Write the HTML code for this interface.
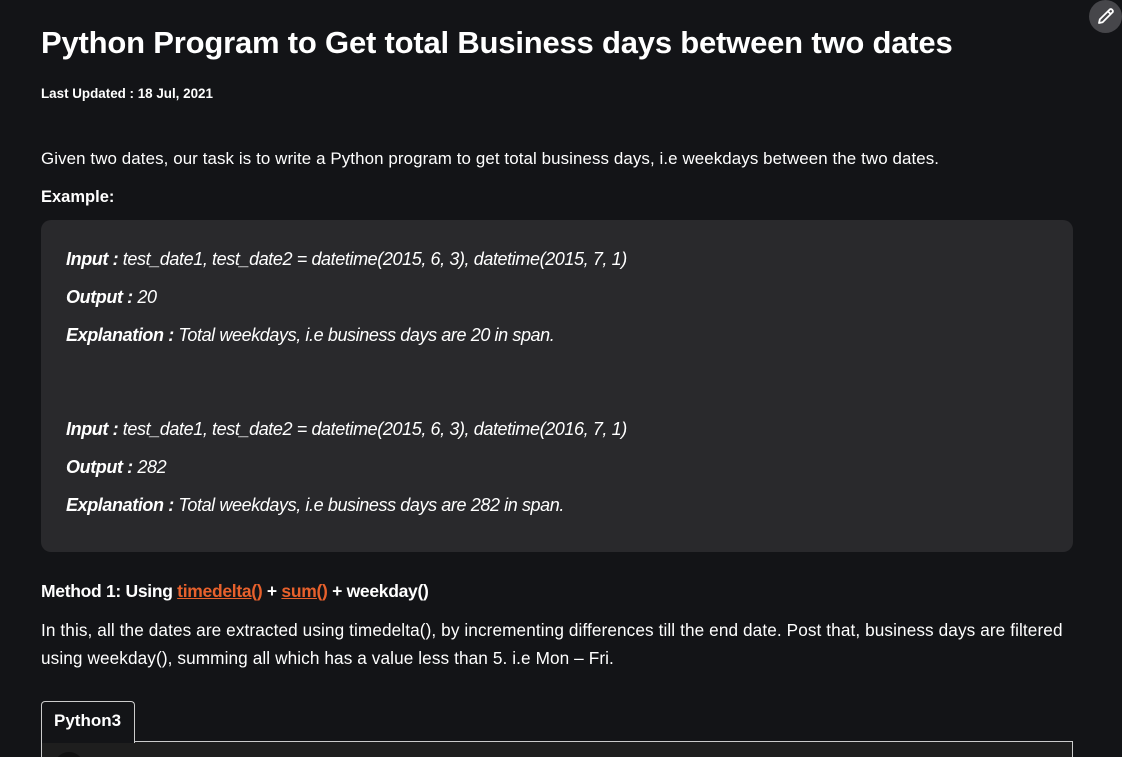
<!DOCTYPE html>
<html><head><meta charset="utf-8"><style>
html,body{margin:0;padding:0;background:#131417;width:1122px;height:757px;overflow:hidden}
body{font-family:"Liberation Sans",sans-serif;color:#fff;position:relative}
.a{position:absolute;white-space:nowrap}
h1{position:absolute;left:41px;top:25px;margin:0;font-size:31px;font-weight:bold;letter-spacing:-0.2px}
.p{letter-spacing:0.1px}
.box{position:absolute;left:41px;top:220px;width:1032px;height:332px;background:#29292c;border-radius:10px}
.ex{font-style:italic;font-size:18px;letter-spacing:-0.4px}
.ex b{font-weight:bold}
a{color:#e8612c;text-decoration:underline}
.pen{position:absolute;left:1089px;top:0;width:33px;height:33px;border-radius:50%;background:#46464a}
.tab{position:absolute;left:41px;top:701px;width:94px;height:42px;border:1px solid #ccc;border-bottom:none;border-radius:4px 4px 0 0;background:#131417;font-size:17px;font-weight:bold;box-sizing:border-box;padding:9px 0 0 12px;z-index:2}
.code{position:absolute;left:41px;top:741px;width:1032px;height:30px;border:1px solid #ccc;background:#1e1e1e;box-sizing:border-box}
</style></head><body>
<h1>Python Program to Get total Business days between two dates</h1>
<div class="a" style="left:41px;top:86px;font-size:13.4px;font-weight:bold">Last Updated : 18 Jul, 2021</div>
<div class="a p" style="left:41px;top:149px;font-size:16.9px">Given two dates, our task is to write a Python program to get total business days, i.e weekdays between the two dates.</div>
<div class="a" style="left:41px;top:188px;font-size:16.5px;font-weight:bold">Example:</div>
<div class="box"></div>
<div class="a ex" style="left:66px;top:249px"><b>Input :</b> test_date1, test_date2 = datetime(2015, 6, 3), datetime(2015, 7, 1)</div>
<div class="a ex" style="left:66px;top:287px"><b>Output :</b> 20</div>
<div class="a ex" style="left:66px;top:325px"><b>Explanation :</b> Total weekdays, i.e business days are 20 in span.</div>
<div class="a ex" style="left:66px;top:419px"><b>Input :</b> test_date1, test_date2 = datetime(2015, 6, 3), datetime(2016, 7, 1)</div>
<div class="a ex" style="left:66px;top:457px"><b>Output :</b> 282</div>
<div class="a ex" style="left:66px;top:495px"><b>Explanation :</b> Total weekdays, i.e business days are 282 in span.</div>
<div class="a" style="left:41px;top:581px;font-size:17.5px;font-weight:bold;letter-spacing:-0.3px">Method 1: Using <a>timedelta()</a> + <a>sum()</a> + weekday()</div>
<div class="a p" style="left:41px;top:620px;font-size:17.2px">In this, all the dates are extracted using timedelta(), by incrementing differences till the end date. Post that, business days are filtered</div>
<div class="a p" style="left:41px;top:648px;font-size:17.2px">using weekday(), summing all which has a value less than 5. i.e Mon – Fri.</div>
<div class="code"><div style="position:absolute;left:12px;top:10px;width:30px;height:30px;border-radius:50%;background:#111"></div></div>
<div class="tab">Python3</div>
<div class="pen"><svg width="33" height="33" viewBox="0 0 33 33"><path d="M10 23 L10.8 19.4 L20.6 9.6 A1.6 1.6 0 0 1 23 9.6 L23.4 10 A1.6 1.6 0 0 1 23.4 12.4 L13.6 22.2 Z M19 11.4 L21.6 14" fill="none" stroke="#fff" stroke-width="1.8" stroke-linejoin="round"/></svg></div>
</body></html>
